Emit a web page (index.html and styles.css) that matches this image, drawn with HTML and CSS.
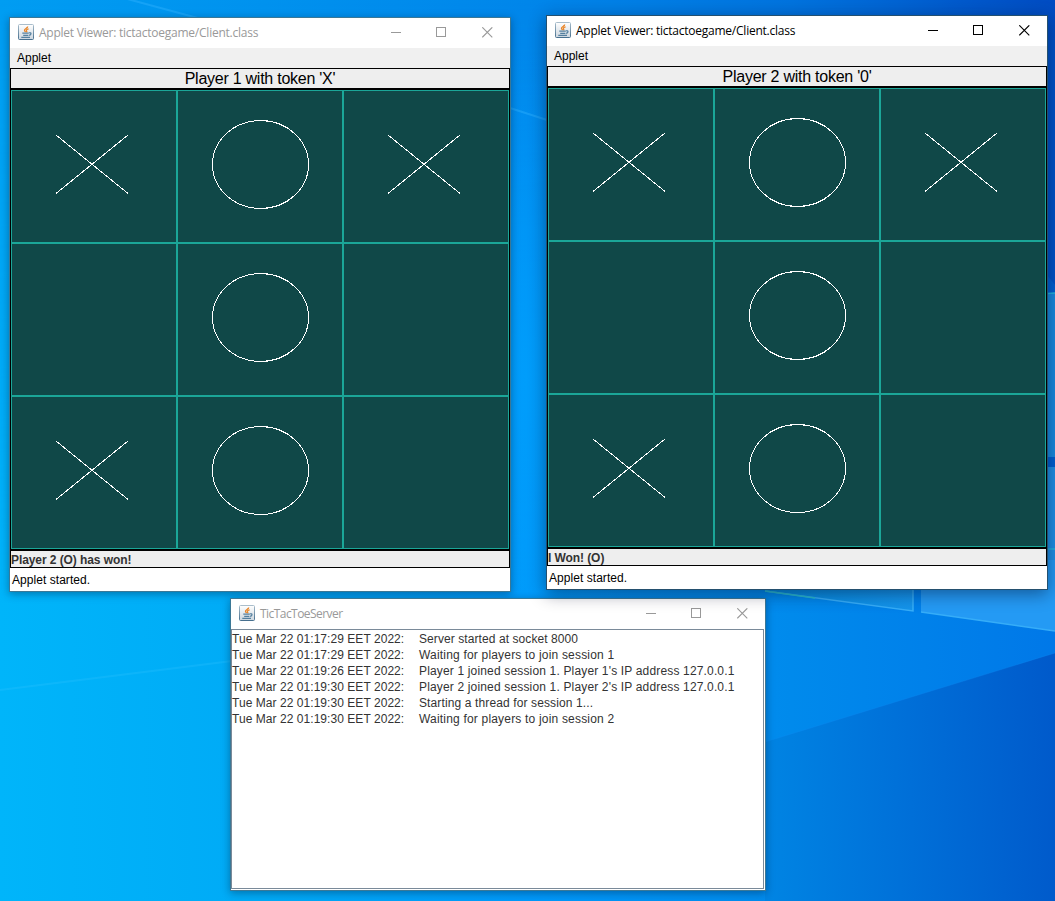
FILE: index.html
```html
<!DOCTYPE html>
<html lang="en">
<head>
<meta charset="utf-8">
<title>TicTacToe</title>
<link rel="stylesheet" href="styles.css">
</head>
<body>
<svg class="symbols" width="0" height="0">
  <defs>
    <linearGradient id="tile" x1="0" y1="0" x2="0" y2="1"><stop offset="0" stop-color="#fff"/><stop offset="1" stop-color="#ccd6df"/></linearGradient>
    <linearGradient id="rim" x1="0" y1="0" x2="0" y2="1"><stop offset="0" stop-color="#a9bdcb"/><stop offset="1" stop-color="#47708f"/></linearGradient>
    <symbol id="java" viewBox="0 0 16 16">
      <rect x=".5" y=".5" width="15" height="15" rx="1" fill="url(#tile)" stroke="url(#rim)"/>
      <path d="M9.700 2.500C9.900 4.200 6.200 4.900 6.500 6.500c.1.700.7 1 1.100 1.500M10.600 4.800C8.900 5.200 8 6 8.600 6.800c.4.500.3.900-.2 1.400" fill="none" stroke="#e98324" stroke-width="1.3"/>
      <path d="M4.300 9.200h6.500M5.200 11.300h5.200M11 8.800c2.800-.5 2.500 1.900.1 2.500M3.300 13.400h8.700" fill="none" stroke="#55809f" stroke-width="1.2"/>
    </symbol>
    <symbol id="min" viewBox="0 0 11 11"><path d="M0 5.500h10" stroke="currentColor"/></symbol>
    <symbol id="max" viewBox="0 0 11 11"><rect x=".5" y=".5" width="9" height="9" fill="none" stroke="currentColor"/></symbol>
    <symbol id="close" viewBox="0 0 11 11"><path d="M.3.3l10 10M10.300.3l-10 10" stroke="currentColor" stroke-width="1.1"/></symbol>
    <symbol id="x" viewBox="0 0 166 153"><path d="M45 45L117 103.500M117 45L45 103.500" stroke="#fff" shape-rendering="crispEdges"/></symbol>
    <symbol id="o" viewBox="0 0 166 153"><ellipse cx="83.500" cy="74.500" rx="48" ry="44" fill="none" stroke="#fff" shape-rendering="crispEdges"/></symbol>
  </defs>
</svg>
<main class="desktop">
  <svg class="wallpaper" viewBox="0 0 1055 901" aria-hidden="true">
    <defs>
      <linearGradient id="sky"><stop offset="0" stop-color="#009df2"/><stop offset=".25" stop-color="#0092ee"/><stop offset=".5" stop-color="#0086ea"/><stop offset=".75" stop-color="#0073de"/><stop offset="1" stop-color="#004cc2"/></linearGradient>
      <linearGradient id="ground"><stop offset="0" stop-color="#00b5fa"/><stop offset=".25" stop-color="#00aaf6"/><stop offset=".5" stop-color="#0099fa"/><stop offset=".75" stop-color="#008aec"/><stop offset="1" stop-color="#0078e8"/></linearGradient>
      <linearGradient id="fade" x1="0" y1="0" x2="0" y2="1"><stop offset="0" stop-color="#000"/><stop offset=".68" stop-color="#fff"/></linearGradient>
      <mask id="lower"><rect width="1055" height="901" fill="url(#fade)"/></mask>
      <linearGradient id="floor" gradientUnits="userSpaceOnUse" x1="765" y1="780" x2="1055" y2="770"><stop offset="0" stop-color="#0084e3"/><stop offset=".5" stop-color="#006fd8"/><stop offset="1" stop-color="#005acb"/></linearGradient>
      <linearGradient id="pane" gradientUnits="userSpaceOnUse" x1="765" y1="0" x2="1055" y2="0"><stop offset="0" stop-color="#048bdf"/><stop offset="1" stop-color="#259df7"/></linearGradient>
      <radialGradient id="glow"><stop offset="0" stop-color="#00a0fd" stop-opacity=".8"/><stop offset="1" stop-color="#00a2ff" stop-opacity="0"/></radialGradient>
    </defs>
    <rect width="1055" height="901" fill="url(#sky)"/>
    <rect width="1055" height="901" fill="url(#ground)" mask="url(#lower)"/>
    <ellipse cx="528" cy="380" rx="120" ry="330" fill="url(#glow)"/>
    <path d="M1047 210V40h8v245l-8-10z" fill="#0053c8"/>
    <path d="M765 742L1055 653V901H765z" fill="url(#floor)"/>
    <path d="M765 742L1055 653" stroke="#108bf3" opacity=".3"/>
    <path d="M700 560h213v51L765 591z" fill="url(#pane)"/>
    <path d="M921 560h134v71l-134-19z" fill="#249af4"/>
    <path d="M765 591l148 20v-22M921 612l134 19" fill="none" stroke="#36adf8" stroke-width="1.500"/>
    <path d="M765 591l50 7" stroke="#29bdd0" stroke-width="1.500"/>
    <path d="M1040 293h15v164h-15z" fill="#198bdf"/>
    <path d="M1040 457h15v10h-15z" fill="#0060d1"/>
    <path d="M1040 467h15v93h-15z" fill="#1f90e6"/>
    <path d="M1040 294l15-1M1040 549h15" stroke="#23b6df" stroke-width="1.500"/>
    <path d="M120-3L205 20M510 108l37 12" stroke="#35b4ff" stroke-width="2" opacity=".4"/>
    <path d="M0 690l232-29" stroke="#35c4ff" stroke-width="2" opacity=".25"/>
  </svg>

  <section class="window applet first">
    <header class="titlebar"><svg class="app-icon"><use href="#java"/></svg><span class="title">Applet Viewer: tictactoegame/Client.class</span>
      <div class="controls"><svg><use href="#min"/></svg><svg><use href="#max"/></svg><svg><use href="#close"/></svg></div></header>
    <nav class="menu">Applet</nav>
    <div class="player"><span>Player 1 with token 'X'</span></div>
    <div class="board">
      <div class="cell"><svg><use href="#x"/></svg></div><div class="cell"><svg><use href="#o"/></svg></div><div class="cell"><svg><use href="#x"/></svg></div>
      <div class="cell"></div><div class="cell"><svg><use href="#o"/></svg></div><div class="cell"></div>
      <div class="cell"><svg><use href="#x"/></svg></div><div class="cell"><svg><use href="#o"/></svg></div><div class="cell"></div>
    </div>
    <div class="result">Player 2 (O) has won!</div>
    <footer class="status">Applet started.</footer>
  </section>

  <section class="window server">
    <header class="titlebar"><svg class="app-icon"><use href="#java"/></svg><span class="title">TicTacToeServer</span>
      <div class="controls"><svg><use href="#min"/></svg><svg><use href="#max"/></svg><svg><use href="#close"/></svg></div></header>
    <div class="scrollpane"><div class="log">
      <time>Tue Mar 22 01:17:29 EET 2022:</time><span class="start">Server started at socket 8000</span>
      <time>Tue Mar 22 01:17:29 EET 2022:</time><span class="wait">Waiting for players to join session 1</span>
      <time>Tue Mar 22 01:19:26 EET 2022:</time><span class="join">Player 1 joined session 1. Player 1's IP address 127.0.0.1</span>
      <time>Tue Mar 22 01:19:30 EET 2022:</time><span class="join">Player 2 joined session 1. Player 2's IP address 127.0.0.1</span>
      <time>Tue Mar 22 01:19:30 EET 2022:</time><span class="thread">Starting a thread for session 1...</span>
      <time>Tue Mar 22 01:19:30 EET 2022:</time><span class="wait">Waiting for players to join session 2</span>
    </div></div>
  </section>

  <section class="window applet second active">
    <header class="titlebar"><svg class="app-icon"><use href="#java"/></svg><span class="title">Applet Viewer: tictactoegame/Client.class</span>
      <div class="controls"><svg><use href="#min"/></svg><svg><use href="#max"/></svg><svg><use href="#close"/></svg></div></header>
    <nav class="menu">Applet</nav>
    <div class="player"><span>Player 2 with token '0'</span></div>
    <div class="board">
      <div class="cell"><svg><use href="#x"/></svg></div><div class="cell"><svg><use href="#o"/></svg></div><div class="cell"><svg><use href="#x"/></svg></div>
      <div class="cell"></div><div class="cell"><svg><use href="#o"/></svg></div><div class="cell"></div>
      <div class="cell"><svg><use href="#x"/></svg></div><div class="cell"><svg><use href="#o"/></svg></div><div class="cell"></div>
    </div>
    <div class="result">I Won! (O)</div>
    <footer class="status">Applet started.</footer>
  </section>
</main>
</body>
</html>
```

FILE: styles.css
```css
* { box-sizing: border-box; }
body { margin: 0; overflow: hidden; }
.symbols { position: absolute; }
.desktop {
  position: relative;
  width: 1055px;
  height: 901px;
  overflow: hidden;
  font: 12px/16px "Liberation Sans", Arial, sans-serif;
  color: #000;
}
.wallpaper { position: absolute; width: 1055px; height: 901px; }

/* Windows placed freely on the desktop */
.window {
  position: absolute;
  display: flex;
  flex-direction: column;
  border: 1px solid #3b7896;
  background: #fff;
  box-shadow: 0 2px 8px rgba(0, 20, 50, .38);
}
.applet { width: 502px; height: 575px; }
.first { left: 9px; top: 17px; }
.second { left: 546px; top: 15px; }
.server { left: 230px; top: 598px; width: 536px; height: 293px; }
.active { border-color: #24506f; box-shadow: 0 4px 16px rgba(0, 10, 40, .45); }

.titlebar {
  display: flex;
  align-items: center;
  height: 30px;
  flex: none;
  padding-left: 8px;
  color: #999;
}
.active .titlebar { color: #000; }
.app-icon { width: 16px; height: 16px; margin-right: 5px; margin-top: -2px; }
.title { font: 12px/16px "Open Sans", sans-serif; letter-spacing: -.24px; white-space: nowrap; }
.server .title { letter-spacing: -.6px; }
.server .title { letter-spacing: -.55px; }
.controls { display: flex; gap: 34px; margin-left: auto; padding-right: 17px; }
.controls svg { width: 11px; height: 11px; margin-top: -2px; }
.controls svg:first-child { margin-right: 0; }
.controls svg:last-child { margin-left: 1px; }

.menu { height: 20px; padding: 2px 7px; background: #f0f0f0; }
.player {
  height: 21px;
  border: 1px solid #000;
  background: #eee;
  text-align: center;
  font-size: 16px;
  line-height: 19px;
  letter-spacing: -.25px;
}
.board {
  display: grid;
  grid-template: repeat(3, 153px) / repeat(3, 166px);
  border: 1px solid #000;
}
.cell { border: 1px solid #1ba698; background: #104848; }
.cell svg { display: block; width: 166px; height: 153px; margin: -1px; }
.result {
  height: 18px;
  border: 1px solid #000;
  background: #eee;
  color: #333;
  font-weight: bold;
  line-height: 18px;
  letter-spacing: -.08px;
}
.status { padding: 4px 2px; letter-spacing: .05px; }

.scrollpane {
  flex: 1;
  padding: 0 1px 1px 0;
}
.log {
  height: 100%;
  display: grid;
  grid-template-columns: 187px 1fr;
  grid-auto-rows: 16px;
  align-content: start;
  padding-top: 1px;
  border: 1px solid #7a8a99;
  color: #333;
  white-space: nowrap;
}
.log time { letter-spacing: .05px; }
.start { letter-spacing: .08px; }
.wait { letter-spacing: .19px; }
.join { letter-spacing: .16px; }
.thread { letter-spacing: .12px; }
```
